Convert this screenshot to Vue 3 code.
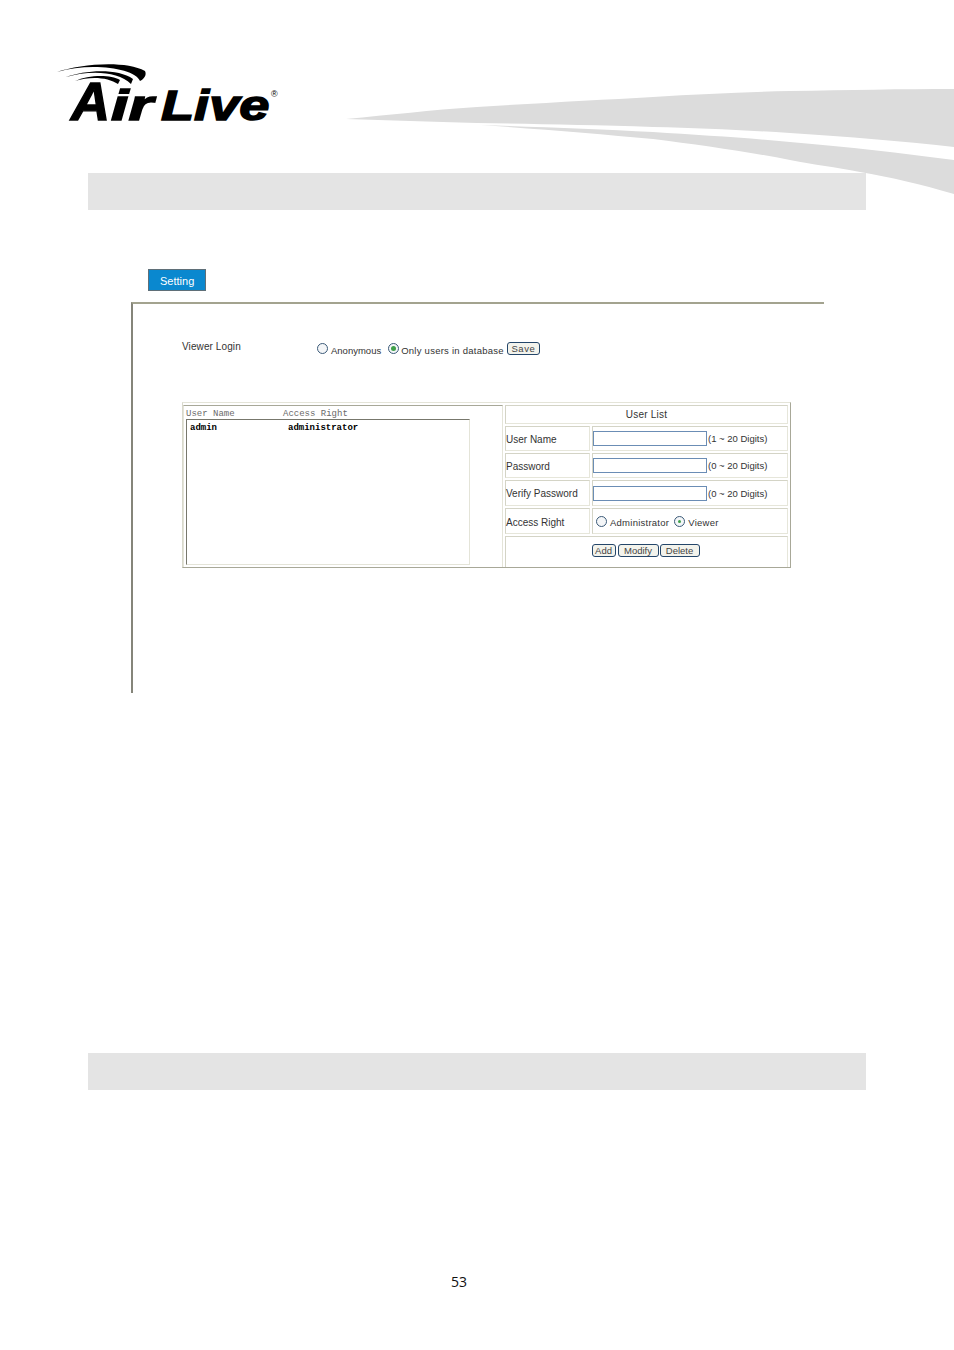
<script setup>
const rows = [
  { label: 'User Name', hint: '(1 ~ 20 Digits)', type: 'text' },
  { label: 'Password', hint: '(0 ~ 20 Digits)', type: 'password' },
  { label: 'Verify Password', hint: '(0 ~ 20 Digits)', type: 'password' }
]
</script>

<template>
  <div class="page">
    <svg class="swoosh" width="954" height="200" viewBox="0 0 954 200" aria-hidden="true">
      <path fill="#dcdcdc" d="M346 119 C 390 115 430 110 477 107 C 540 103 600 100 653 97 C 700 94 745 92 790 91 C 850 90 900 89 954 89 L954 147 C 900 141 850 137 790 133 C 740 130 700 128 653 127 C 590 125 530 124 477 123 C 430 122 390 120 346 119 Z"/>
      <path fill="#dcdcdc" d="M481 125 C 540 127 600 129 653 132 C 700 135 750 138 790 142 C 850 147 900 153 954 160 L954 194 C 920 184 890 177 860 172 C 835 167 815 165 790 160 C 750 152 700 145 653 139 C 600 134 540 129 481 125 Z"/>
    </svg>

    <header class="head">
      <svg class="logo" width="224" height="64" viewBox="55 60 224 64" role="img" aria-label="Air Live">
        <path d="M57 72 C 80 64 125 60 145 71 C 147 75 144 79 140 81 C 135 68 90 62 57 72 Z"/>
        <path d="M66 77 C 85 70 118 68 133 79 L131 84 C 118 71 90 70 66 77 Z"/>
        <path d="M75 81 C 88 75 110 74 120 80 L118 84 C 108 77 90 76 75 81 Z"/>
        <text class="mark" x="71" y="120" font-size="54">A</text>
        <text class="mark" transform="translate(111 120) scale(1.5 1)" font-size="42">ir</text>
        <text class="mark" transform="translate(161 120) scale(1.29 1)" font-size="42">Live</text>
        <text class="reg" x="271" y="97" font-size="9">®</text>
      </svg>
    </header>

    <div class="band"></div>

    <div class="tab">Setting</div>

    <section class="panel">
      <div class="login">
        <span class="login-label">Viewer Login</span>
        <span class="choice">
          <i class="radio"></i><span class="opt anon">Anonymous</span>
          <i class="radio on green"></i><span class="opt only">Only users in database</span>
          <button class="btn save" type="button">Save</button>
        </span>
      </div>

      <div class="table">
        <div class="left">
          <div class="list-head"><span class="col-name">User Name</span><span>Access Right</span></div>
          <div class="list">
            <span class="cell-name">admin</span><span>administrator</span>
          </div>
        </div>

        <div class="right">
          <div class="cell title">User List</div>
          <template v-for="r in rows" :key="r.label">
            <div class="cell lab">{{ r.label }}</div>
            <div class="cell val">
              <input class="inp" :type="r.type" />
              <span class="hint">{{ r.hint }}</span>
            </div>
          </template>
          <div class="cell lab access-lab">Access Right</div>
          <div class="cell val access">
            <i class="radio"></i><span class="a-text">Administrator</span>
            <i class="radio on"></i><span class="a-text">Viewer</span>
          </div>
          <div class="cell actions">
            <button class="btn add" type="button">Add</button>
            <button class="btn modify" type="button">Modify</button>
            <button class="btn delete" type="button">Delete</button>
          </div>
        </div>
      </div>
    </section>

    <div class="band second"></div>
    <div class="pageno">53</div>
  </div>
</template>

<style scoped>
.page {
  position: relative;
  width: 954px;
  height: 1350px;
  overflow: hidden;
  background: #fff;
  font-family: "Liberation Sans", Arial, sans-serif;
  color: #333;
}
.swoosh { position: absolute; left: 0; top: 0; }
.head { height: 173px; box-sizing: border-box; padding: 60px 0 0 55px; position: relative; }
.logo { display: block; overflow: visible; }
.logo path { fill: #000; }
.mark {
  font-family: "Liberation Sans", Arial, sans-serif;
  font-weight: 700;
  font-style: italic;
  fill: #000;
  stroke: #000;
  stroke-width: 1.4px;
}
.reg { font-family: "Liberation Sans", Arial, sans-serif; fill: #000; }
.band { margin-left: 88px; width: 778px; height: 37px; background: #e4e4e4; }
.second { margin-top: 360px; }
.tab {
  margin: 59px 0 0 148px;
  width: 58px;
  height: 22px;
  box-sizing: border-box;
  border: 1px solid #5f6f78;
  background: #0a88cf;
  color: #fff;
  font-size: 11px;
  line-height: 22px;
  padding-left: 11px;
}
.panel {
  margin: 11px 0 0 131px;
  width: 693px;
  height: 391px;
  box-sizing: border-box;
  border-top: 2px solid #a3a38f;
  border-left: 2px solid #85857a;
  padding: 37px 0 0 49px;
}
.login { display: flex; height: 61px; font-size: 9.5px; }
.login-label { width: 135px; font-size: 10px; line-height: 12px; letter-spacing: 0.1px; }
.choice { display: flex; align-items: flex-start; padding-top: 1px; }
.opt { line-height: 12px; margin-top: 3px; }
.anon { margin-left: 3px; margin-right: 7px; }
.only { margin-left: 2px; margin-right: 3px; letter-spacing: 0.25px; }
.radio {
  display: block;
  flex: none;
  box-sizing: border-box;
  width: 11px;
  height: 11px;
  margin-top: 1px;
  border: 1px solid #3b5a78;
  border-radius: 50%;
  background: #f4f6f8;
  position: relative;
}
.radio.on::after {
  content: "";
  position: absolute;
  left: 3px;
  top: 3px;
  width: 3px;
  height: 3px;
  border-radius: 50%;
  background: #3fa04a;
}
.radio.green::after { left: 2px; top: 2px; width: 5px; height: 5px; }
.btn {
  box-sizing: border-box;
  height: 13px;
  padding: 0;
  border: 1px solid #24466a;
  border-radius: 3px;
  background: #f3f3ec;
  color: #444;
  font: 9.5px/11px "Liberation Sans", Arial, sans-serif;
  text-align: center;
}
.save { width: 33px; letter-spacing: 0.5px; }
.table {
  width: 609px;
  height: 166px;
  box-sizing: border-box;
  display: grid;
  grid-template-columns: 320px 283px;
  column-gap: 2px;
  padding: 2px 2px 0 0;
  border: 1px solid;
  border-color: #e4e4d8 #a8a898 #a8a898 #d8d8cc;
}
.left {
  border-top: 1px solid #a8a898;
  border-left: 1px solid #e4e4d8;
  border-right: 1px solid #e4e4d8;
  padding: 2px 0 0 2px;
  font: 9px/12px "Liberation Mono", "Courier New", monospace;
}
.list-head { height: 11px; color: #6a6a6a; line-height: 13px; white-space: nowrap; }
.col-name { display: inline-block; width: 97px; }
.list {
  width: 284px;
  height: 146px;
  box-sizing: border-box;
  border: 1px solid;
  border-color: #77776c #e4e4d8 #e4e4d8 #77776c;
  padding: 2px 0 0 3px;
  color: #000;
  font-weight: 700;
  white-space: nowrap;
}
.cell-name { display: inline-block; width: 98px; }
.right {
  display: grid;
  grid-template-columns: 85px 196px;
  grid-template-rows: 19px 25px 25px 26px 26px 31px;
  gap: 2px;
  font-size: 10px;
}
.cell {
  box-sizing: border-box;
  border: 1px solid;
  border-color: #d4d4c6 #e6e6da #e6e6da #d4d4c6;
  display: flex;
  align-items: center;
  white-space: nowrap;
}
.title { grid-column: 1 / 3; justify-content: center; letter-spacing: 0.2px; }
.lab { padding-top: 1px; }
.access-lab { padding-top: 3px; }
.inp {
  box-sizing: border-box;
  width: 114px;
  height: 15px;
  margin: 0 1px 0 0;
  padding: 0;
  border: 1px solid #6b8db5;
  background: #fff;
  outline: none;
}
.hint { font-size: 9.5px; }
.access { padding-left: 3px; }
.access .radio { margin-top: 0; }
.a-text { margin: 3px 5px 0 3px; font-size: 9.5px; letter-spacing: 0.25px; }
.actions {
  grid-column: 1 / 3;
  border-bottom: 0;
  justify-content: center;
  align-items: flex-start;
  gap: 2px;
  padding: 7px 2px 0 0;
}
.add { width: 24px; }
.modify { width: 41px; }
.delete { width: 40px; margin-left: -1px; }
.pageno {
  position: absolute;
  left: 451px;
  top: 1273px;
  font-family: "Open Sans", sans-serif;
  font-size: 14px;
  line-height: 18px;
  color: #111;
}
</style>
